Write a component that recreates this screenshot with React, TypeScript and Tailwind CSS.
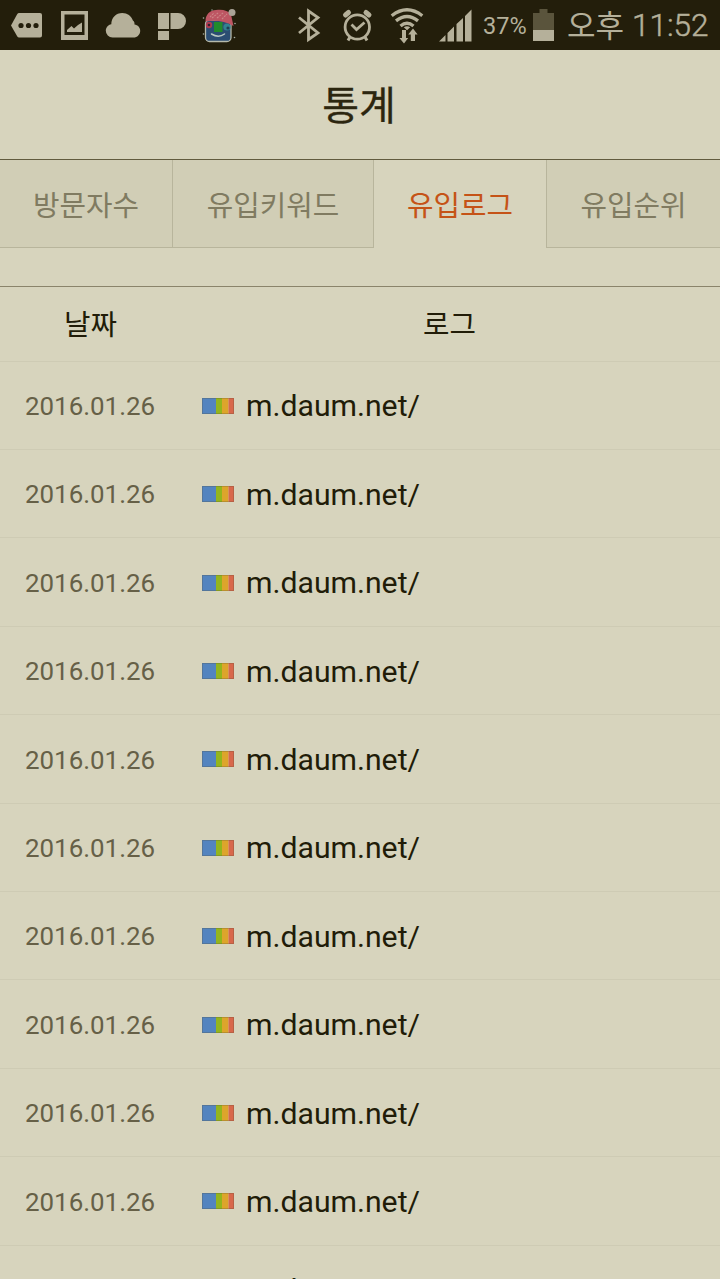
import React from 'react';

const tabs = [
  { label: '방문자수', width: 'w-[172px]' },
  { label: '유입키워드', width: 'w-[202px]' },
  { label: '유입로그', width: 'w-[172px]', active: true },
  { label: '유입순위', width: 'w-[174px]' },
];

const logs = Array.from({ length: 11 }, () => ({ date: '2016.01.26', url: 'm.daum.net/' }));

function StatusBar() {
  return (
    <header className="flex h-[50px] shrink-0 items-start bg-[#231e0b] text-[#b5b09a]">
      <svg className="h-[50px] w-[50px] shrink-0" viewBox="0 0 50 50" fill="currentColor">
        <path d="M19 13h21q2 0 2 2v20.500q0 2-2 2H19q-1 0-1.700-1L11 25.500l6.300-11.500q.700-1 1.700-1z" />
        <g fill="#231e0b"><circle cx="21" cy="25.500" r="2.600" /><circle cx="28.500" cy="25.500" r="2.600" /><circle cx="36" cy="25.500" r="2.600" /></g>
      </svg>
      <svg className="h-[50px] w-[50px] shrink-0" viewBox="50 0 50 50" fill="currentColor">
        <path fillRule="evenodd" d="M61 11h27v29H61zM64.500 14.500v20.500h20V14.500z" />
        <path d="M67 32v-2l4.500-4 2.500 2.500 4-3.500 4-2.500V32z" />
      </svg>
      <svg className="h-[50px] w-[50px] shrink-0" viewBox="100 0 50 50" fill="currentColor">
        <path d="M112.500 37.500a6.700 6.700 0 0 1-6.700-6.700c0-3.300 2.300-6 5.500-6.500 0-6.500 4.700-11.300 11-11.300 5 0 9.200 3 10.600 7.600 1.400 1 1.600 2 1.600 3.800 3.300.300 5.700 2.900 5.700 6.300 0 3.800-2.900 6.800-6.700 6.800z" />
      </svg>
      <svg className="h-[50px] w-[50px] shrink-0" viewBox="150 0 50 50" fill="currentColor">
        <path d="M158 13h11v16h-11zM170.500 13h7.500a8 8 0 0 1 0 16h-7.500zM158 31h11v9h-11z" />
      </svg>
      <svg className="h-[50px] w-[80px] shrink-0" viewBox="200 0 80 50">
        <rect x="205.500" y="20" width="25.500" height="21.500" rx="4" fill="#2b4d72" stroke="#b5b9aa" strokeWidth="1.300" />
        <circle cx="209" cy="25" r="3.200" fill="#b03b50" /><circle cx="209" cy="25" r="1.300" fill="#34202e" />
        <circle cx="227" cy="27" r="3.600" fill="#318391" /><circle cx="228" cy="28" r="1.600" fill="#203e55" />
        <path d="M214 22h8.500v10h-8.500z" fill="#218b2b" />
        <path d="M211.500 34q7 4.500 13 0" fill="none" stroke="#b9c8c0" strokeWidth="1.500" strokeLinecap="round" />
        <path d="M205.500 21.500c0-7 4-11 10.500-11.500 7-.800 12 .500 15 4.500l2.500 11.500c-9-5-18-6-28-4.500z" fill="#bd5663" />
        <path d="M210 17l4-4m-2 5 6-5m-1 5 6-5m-1 6 5-5" stroke="#ce8587" strokeWidth="1.100" strokeDasharray="2 1" />
        <circle cx="232" cy="12.500" r="3.500" fill="#aaa397" />
        <g fill="#a6afa5"><circle cx="203.500" cy="18" r=".8" /><circle cx="203.500" cy="34" r=".8" /><circle cx="235" cy="23.500" r=".8" /><circle cx="234.500" cy="37.500" r=".8" /><circle cx="212" cy="10" r=".7" /></g>
      </svg>
      <svg className="h-[50px] w-[50px] shrink-0" viewBox="280 0 50 50" fill="none" stroke="currentColor" strokeWidth="2.800">
        <path d="m299 17.500 19 15.500-9.500 6.500V11l9.500 6.500L299 33" />
      </svg>
      <svg className="h-[50px] w-[55px] shrink-0" viewBox="330 0 55 50" fill="none" stroke="currentColor">
        <circle cx="357.300" cy="27" r="12.200" strokeWidth="2.800" />
        <path d="m351.500 24.500 5 5 8-7" strokeWidth="2.800" />
        <path d="m345.500 15 3-2.500m17.500 0 3 2.500" strokeWidth="5" strokeLinecap="round" />
        <path d="m350 37-2 3.500M365 37l2 3.500" strokeWidth="3" />
      </svg>
      <svg className="h-[50px] w-[50px] shrink-0" viewBox="385 0 50 50" fill="none" stroke="currentColor" strokeWidth="3.300">
        <path d="M391.700 15.700q15.300-11.900 30.600 0M396 20.900q11-8.800 22 0M400.500 26q6.500-5.600 13 0" />
        <path d="m403.800 27.300 3.200 3 3.200-3q-3.200-2-6.400 0z" fill="currentColor" stroke="none" />
        <path d="M402 30h4v8h2.200L404 43.500l-4.600-5.500h2.600zM410.800 41v-6.500h-2.600l4.800-6 4.600 6h-2.600V41z" fill="currentColor" stroke="#231e0b" strokeWidth=".8" paintOrder="stroke" />
      </svg>
      <svg className="h-[50px] w-[46px] shrink-0" viewBox="435 0 46 50" fill="currentColor">
        <path d="M439 41.500 445.500 35v6.500zM447.500 33l6.500-6.500v15h-6.500zM456.500 24l6.500-6v23.500h-6.500zM465 16l6.500-6.500v32H465z" />
      </svg>
      <span className="ml-[2px] mt-[9px] w-[48px] shrink-0 whitespace-nowrap text-[23.500px] leading-[34px]">37%</span>
      <svg className="h-[50px] w-[30px] shrink-0" viewBox="531 0 30 50" fill="currentColor">
        <path d="M533 13h6.500V9h8v4h6.500v17h-21z" fill="#5a543c" />
        <path d="M533 30h21v11h-21z" />
      </svg>
      <span className="ml-[6px] mt-[6px] shrink-0 whitespace-nowrap text-[31px] font-normal leading-[42px]">오후</span>
      <span className="ml-[8px] mt-[5px] shrink-0 whitespace-nowrap text-[31.500px] font-light leading-[42px] [-webkit-text-stroke:0.5px_#b5b09a]">11:52</span>
    </header>
  );
}

function SourceIcon() {
  return (
    <svg className="mt-[1px] h-4 w-8 shrink-0" viewBox="0 0 32 16">
      <path d="M0 0h14v16H0z" fill="#5384bf" />
      <path d="M14 0h6v16h-6z" fill="#94b51d" />
      <path d="M20 0h6.500v16H20z" fill="#dda52b" />
      <path d="M26.500 0H32v16h-5.500z" fill="#d8684b" />
      <path d="M.5.5h31v15H.5z" fill="none" stroke="#544b30" strokeOpacity=".25" />
    </svg>
  );
}

export default function App() {
  return (
    <div className="flex h-[1279px] w-[720px] flex-col overflow-hidden bg-[#d7d4bd] font-[Roboto,'Noto_Sans_CJK_KR',sans-serif] text-[#211c08]">
      <StatusBar />
      <h1 className="flex h-[110px] shrink-0 items-center justify-center border-b border-[#615b3e] pr-[2px] pt-[4px] text-[40px] font-normal leading-none text-[#2c260f] [-webkit-text-stroke:0.3px_#2c260f]">통계</h1>
      <nav className="flex h-[88px] shrink-0">
        {tabs.map((tab, index) => (
          <button
            key={tab.label}
            className={`${tab.width} flex shrink-0 items-center justify-center pt-[5px] text-[28.800px] leading-none ${
              tab.active
                ? 'text-[#c55317]'
                : 'border-b border-[#b8b59c] bg-[#d1ceb6] text-[#807b61]'
            } ${index === 1 ? 'border-x' : ''} ${index === 3 ? 'border-l' : ''}`}
          >
            {tab.label}
          </button>
        ))}
      </nav>
      <section className="mt-[38px] shrink-0 border-t border-[#8a846b]">
        <div className="flex h-[74.600px] items-center border-b border-[#cecbb4] text-[28.800px] leading-none">
          <div className="w-[181px] pt-[4px] text-center">날짜</div>
          <div className="w-[537px] pt-[4px] text-center">로그</div>
        </div>
        {logs.map((log, index) => (
          <div key={index} className="flex h-[88.400px] items-center border-b border-[#cecbb4]">
            <time className="w-[202px] pl-[25px] pt-[3.500px] text-[25.900px] leading-none text-[#666047]">{log.date}</time>
            <SourceIcon />
            <span className="ml-[12px] pt-[2.500px] text-[30.200px] leading-none">{log.url}</span>
          </div>
        ))}
      </section>
    </div>
  );
}
